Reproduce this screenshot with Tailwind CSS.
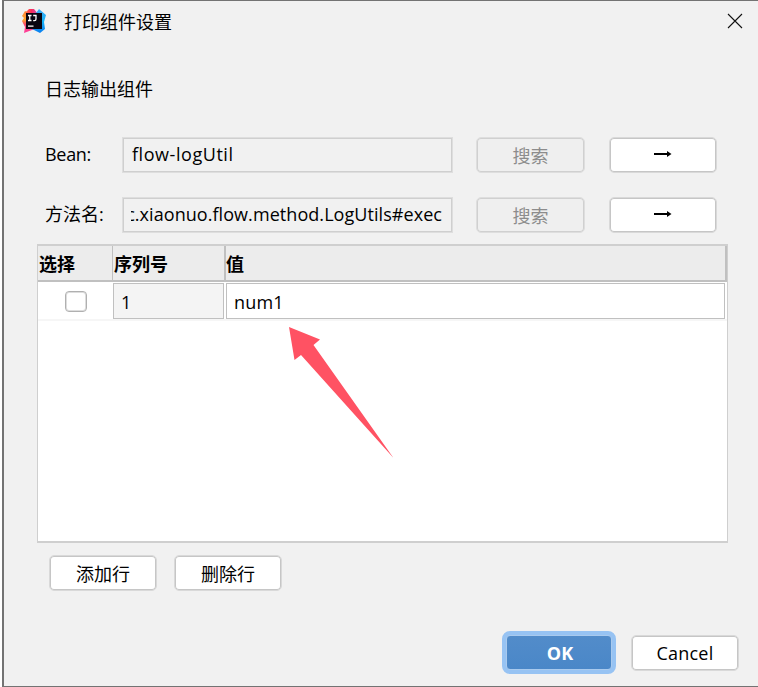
<!DOCTYPE html>
<html lang="zh-CN">
<head>
<meta charset="utf-8">
<title>打印组件设置</title>
<script src="https://cdn.jsdelivr.net/npm/@tailwindcss/browser@4"></script>
</head>
<body class="w-[758px] h-[687px] overflow-hidden bg-white font-['Open_Sans','Noto_Sans_CJK_SC',sans-serif] text-[18px] leading-[24px] text-black">
<div class="ml-[2px] h-[687px] w-[756px] flex flex-col border-l-2 border-t border-b border-[#737373] bg-[#f1f1f1] relative">
  <header class="flex h-[44px] items-center pl-[18px] pr-[15px] shrink-0">
    <svg class="w-6 h-6 shrink-0 -mt-[5px]" viewBox="0 0 24 24">
      <defs>
        <linearGradient id="warm" x1="0" y1="0" x2="0" y2="1"><stop offset="0" stop-color="#ff8a3c"/><stop offset=".4" stop-color="#ffa52e"/><stop offset=".6" stop-color="#fc4a6a"/><stop offset="1" stop-color="#ff3da0"/></linearGradient>
        <linearGradient id="top" x1="0" y1="0" x2="1" y2="0"><stop offset="0" stop-color="#ff7a3c"/><stop offset=".5" stop-color="#fb2b5d"/><stop offset="1" stop-color="#c450b8"/></linearGradient>
        <linearGradient id="cool" x1="0" y1="0" x2="0" y2="1"><stop offset="0" stop-color="#3fa8f5"/><stop offset=".5" stop-color="#14b4f8"/><stop offset="1" stop-color="#0a7df0"/></linearGradient>
      </defs>
      <path d="M3 2 8 4 14 20 10 21 2 24 3 18 0 12 2 9 0 7Z" fill="url(#warm)"/>
      <path d="M3 4 7 0 12 0 16 5 4 6Z" fill="url(#top)"/>
      <path d="M14 4 17 0 24 6 22 13 23 20 18 24 10 20 15 15Z" fill="url(#cool)"/>
      <path d="M4 4H20V20H4Z" fill="#080510"/>
      <path d="M6 6.5H9.5M7.75 6.5V11.5M6 11.5H9.5M11.2 6.5H14V10Q14 11.6 12.5 11.6H11.2M6 17.2H11.5" fill="none" stroke="#fff" stroke-width="1.3"/>
    </svg>
    <h1 class="ml-[18px] -mt-[2px] flex-1 leading-[24px]">打印组件设置</h1>
    <svg class="w-4 h-4 -mt-[5px]" viewBox="0 0 16 16"><path d="M1 1 15 15M15 1 1 15" stroke="#111" stroke-width="1.1" fill="none"/></svg>
  </header>

  <main class="pl-[33px] pt-[32px] h-[200px] shrink-0">
    <p class="pl-2 h-[60px]">日志输出组件</p>
    <div class="flex h-9 items-center pl-2">
      <span class="w-[77px] -mt-[2px] tracking-[-0.3px]">Bean:</span>
      <div class="w-[331px] h-9 border border-[#dedede] inset-shadow-[0_0_0_1px_#cfcfcf] bg-[#f1f1f1] pl-[9px] leading-[33px] tracking-[0.55px]">flow-logUtil</div>
      <button disabled class="ml-[23px] w-[109px] h-9 rounded-[5px] border border-[#dedede] inset-shadow-[0_0_0_1px_#d0d0d0] bg-[#efefef] text-[#8c8c8c] leading-[36px]">搜索</button>
      <button class="ml-6 w-[108px] h-9 rounded-[5px] border border-[#d9d9d9] inset-shadow-[0_0_0_1px_#c6c6c6] bg-white flex items-center justify-center"><svg class="w-[18px] h-2 -mt-[2px]" viewBox="0 0 18 8"><path d="M0 4H16" stroke="#000" stroke-width="2"/><path d="M13 1 17.5 4 13 7Z" fill="#000"/></svg></button>
    </div>
    <div class="mt-6 flex h-9 items-center pl-2">
      <span class="w-[77px] -mt-[2px]">方法名:</span>
      <div class="w-[331px] h-9 border border-[#dedede] inset-shadow-[0_0_0_1px_#cfcfcf] bg-[#f1f1f1] pl-2 pr-[10px] leading-[33px]"><div class="flex justify-end overflow-hidden whitespace-nowrap tracking-[0.06px]"><span>c.xiaonuo.flow.method.LogUtils#exec</span></div></div>
      <button disabled class="ml-[23px] w-[109px] h-9 rounded-[5px] border border-[#dedede] inset-shadow-[0_0_0_1px_#d0d0d0] bg-[#efefef] text-[#8c8c8c] leading-[36px]">搜索</button>
      <button class="ml-6 w-[108px] h-9 rounded-[5px] border border-[#d9d9d9] inset-shadow-[0_0_0_1px_#c6c6c6] bg-white flex items-center justify-center"><svg class="w-[18px] h-2 -mt-[2px]" viewBox="0 0 18 8"><path d="M0 4H16" stroke="#000" stroke-width="2"/><path d="M13 1 17.5 4 13 7Z" fill="#000"/></svg></button>
    </div>
  </main>

  <section class="ml-[33px] -mt-px w-[691px] h-[299px] border-t-2 border-b-2 border-x border-[#cfcfcf] bg-white shrink-0">
    <div class="flex h-9 border-b-2 border-r-2 border-[#c0c0c0] bg-[#ececec] font-bold leading-[37px]">
      <div class="w-[75px] pl-px border-r border-[#c0c0c0]">选择</div>
      <div class="w-[113px] pl-px border-r-2 border-[#c0c0c0]">序列号</div>
      <div>值</div>
    </div>
    <div class="flex h-[39px] pt-px border-b-2 border-[#f6f6f6]">
      <div class="w-[75px] pl-[27px] pt-2"><div class="w-[22px] h-[21px] rounded-[4px] border border-[#b0b0b0] inset-shadow-[0_0_0_1px_#dddddd] bg-white"></div></div>
      <div class="w-[111px] h-9 border border-[#c0c0c0] bg-[#f4f4f4] pl-[7px] leading-[36px]">1</div>
      <div class="ml-[2px] w-[499px] h-9 border border-[#c0c0c0] pl-[7px] leading-[36px] tracking-[0.2px]">num1</div>
    </div>
  </section>

  <div class="flex gap-4 pl-[45px] mt-3 shrink-0">
    <button class="w-[108px] h-9 rounded-[5px] border border-[#d9d9d9] inset-shadow-[0_0_0_1px_#c6c6c6] bg-white leading-[36px]">添加行</button>
    <button class="w-[108px] h-9 ml-px rounded-[5px] border border-[#d9d9d9] inset-shadow-[0_0_0_1px_#c6c6c6] bg-white leading-[36px]">删除行</button>
  </div>

  <footer class="mt-10 flex items-center justify-end gap-[15px] pr-[19px] shrink-0">
    <button class="w-[114px] h-[43px] rounded-[8px] border-4 border-[#97c3f3] bg-[#97c3f3]"><span class="block h-full rounded-[4px] border border-[#a9caee] bg-linear-to-b from-[#528cca] to-[#4a87c8] pl-[2px] font-bold text-white leading-[35px]">OK</span></button>
    <button class="w-[108px] h-9 rounded-[5px] border border-[#d9d9d9] inset-shadow-[0_0_0_1px_#c6c6c6] bg-white leading-[34px] tracking-[0.2px]">Cancel</button>
  </footer>

  <svg class="absolute left-[284px] top-[325px] w-[107px] h-[133px]" viewBox="0 0 107 133"><path d="M1 1 32 13.5 25.5 19 105.5 132 13 29 6.5 34Z" fill="#ff5263"/></svg>
</div>
</body>
</html>
